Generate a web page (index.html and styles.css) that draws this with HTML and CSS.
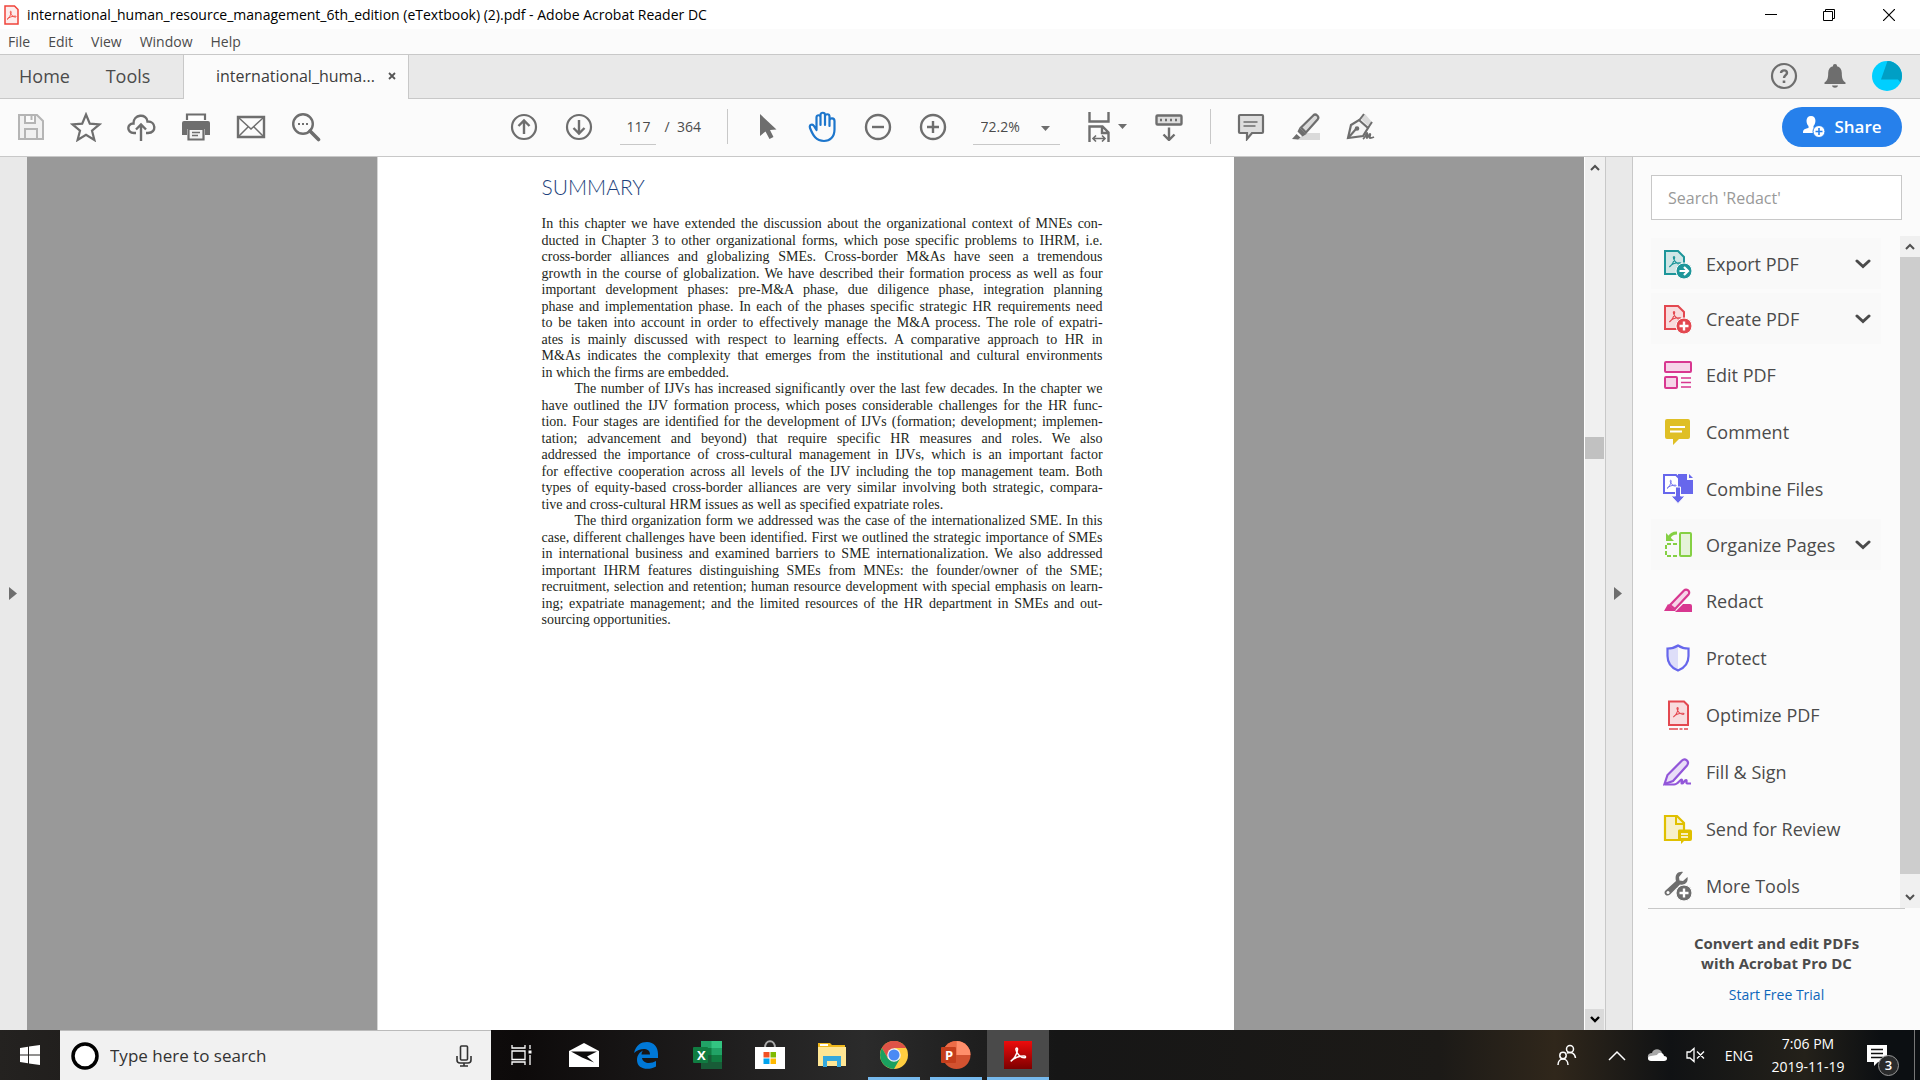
FILE: index.html
```html
<!DOCTYPE html>
<html lang="en">
<head>
  <meta charset="UTF-8" />
  <meta name="viewport" content="width=device-width, initial-scale=1.0"/>
  <title>international_human_resource_management_6th_edition (eTextbook) (2).pdf - Adobe Acrobat Reader DC</title>
  <link rel="stylesheet" href="styles.css">
</head>
<body>
  <svg class="defs" width="0" height="0" aria-hidden="true">
    <symbol id="acro" viewBox="0 0 20 20"><path d="M2 17c3-1.5 7-8 7.5-13 .2-2.4-2-2.4-1.8 0C8.2 8 12.5 13 17 13c2 0 2-1.8 0-1.9C12 11 5 13 2 17z" fill="none" stroke="currentColor" stroke-width="1.6"/></symbol>
    <symbol id="chev" viewBox="0 0 16 10"><path d="M2 2l6 5.500L14 2" fill="none" stroke="#4b4b4b" stroke-width="3" stroke-linecap="round"/></symbol>
  </svg>

  <!-- title bar -->
  <header class="titlebar">
    <svg width="15" height="20" viewBox="0 0 15 20" color="#f0433a"><path d="M1 1h9.500L14 4.500V19H1z" fill="#fdecec" stroke="#f0433a" stroke-width="1.500"/><use href="#acro" x="2" y="5" width="11" height="11"/></svg>
    <span class="title">international_human_resource_management_6th_edition (eTextbook) (2).pdf - Adobe Acrobat Reader DC</span>
    <div class="win-buttons">
      <button aria-label="Minimize"><svg width="12" height="12"><path d="M0 5.500h12" stroke="#000"/></svg></button>
      <button aria-label="Restore"><svg width="12" height="12" fill="none" stroke="#000"><path d="M.5 2.500h9v9h-9zM2.500 2.500v-2h9v9h-2"/></svg></button>
      <button aria-label="Close"><svg width="12" height="12"><path d="M0 0l12 12M12 0L0 12" stroke="#000" stroke-width="1.200"/></svg></button>
    </div>
  </header>

  <nav class="menubar">
    <button>File</button><button>Edit</button><button>View</button><button>Window</button><button>Help</button>
  </nav>

  <!-- tabs -->
  <div class="tabbar">
    <button class="tab-main">Home</button>
    <button class="tab-main">Tools</button>
    <div class="doc-tab">
      <button class="tab-name">international_huma...</button>
      <button class="tab-close" aria-label="Close tab"><svg width="8" height="8"><path d="M1 1l6 6M7 1L1 7" stroke="#555" stroke-width="1.800"/></svg></button>
    </div>
    <div class="account">
      <button aria-label="Help"><svg width="28" height="28" fill="none" stroke="#6e6e6e"><circle cx="14" cy="14" r="12" stroke-width="2.200"/><path d="M11 11c.3-3.600 6-3.500 6 0 0 2-3 2.500-3 5" stroke-width="2.400"/><path d="M14 18.500v2.500" stroke-width="2.600"/></svg></button>
      <button aria-label="Notifications"><svg width="22" height="26" fill="#6e6e6e"><path d="M11 1c1.500 0 2 .8 2 2.200 3 .8 4.800 3 4.800 6.800 0 5 .8 7.500 3.700 9.500V21H.5v-1.500C3.400 17.500 4.200 15 4.200 10 4.200 6.200 6 4 9 3.200 9 1.800 9.500 1 11 1zM8 22.500h6c-.5 3-5.500 3-6 0z"/></svg></button>
      <button aria-label="Account"><svg width="30" height="30"><circle cx="15" cy="15" r="15" fill="#00cfff"/><path d="M15.500 0A15 15 0 0 1 30 15a15 15 0 0 1-1.500 6.500L26 18.500H9z" fill="#009fc5"/></svg></button>
    </div>
  </div>

  <!-- toolbar -->
  <div class="toolbar">
    <div class="tools-left">
      <button class="tool" aria-label="Save"><svg width="28" height="28" fill="none" stroke="#b5b5b5" stroke-width="2"><path d="M2 2h18l6 6v18H2zM8 2v8h10V2M8 26V16h12v10" fill="#f1f1f1"/><path d="M14.500 3v4"/></svg></button>
      <button class="tool" aria-label="Star"><svg width="32" height="30" fill="none" stroke="#6e6e6e" stroke-width="2.200"><path d="M16 2.500l3.800 9.200 9.700.7-7.500 6.300 2.400 9.300L16 22.800 7.600 28l2.400-9.300-7.500-6.300 9.700-.7z"/></svg></button>
      <button class="tool" aria-label="Upload to cloud"><svg width="30" height="30" fill="none" stroke="#6e6e6e" stroke-width="2.400"><path d="M10 21H8C0 21 1 11 7.500 11.500 7 2 21 1 21.500 9.500 30 9 31 21 22 21h-2M15 29V13M10 17.500l5-5 5 5"/></svg></button>
      <button class="tool" aria-label="Print"><svg width="30" height="28"><path d="M6 7V1.500h18V7" fill="#fff" stroke="#6e6e6e" stroke-width="2.200"/><path d="M3 8h24q2 0 2 2v12h-5v-6H6v6H1V10q0-2 2-2z" fill="#6e6e6e"/><path d="M7.500 16h15v10.500h-15z" fill="#f3f3f3" stroke="#6e6e6e" stroke-width="2.200"/><path d="M11 19.500h8M11 22.500h6" stroke="#6e6e6e" stroke-width="1.500"/></svg></button>
      <button class="tool" aria-label="Email"><svg width="30" height="24" fill="none" stroke="#6e6e6e" stroke-width="2"><path d="M2 2h26v20H2z" stroke-width="2.400"/><path d="M3 3l12 11L27 3M3 21l9-9M27 21l-9-9" stroke-width="1.500"/></svg></button>
      <button class="tool" aria-label="Find"><svg width="30" height="30" fill="none" stroke="#6e6e6e"><circle cx="12" cy="12" r="9.800" stroke-width="2.400"/><path d="M19 19l8.500 8.500" stroke-width="3.600" stroke-linecap="round"/><path d="M7 12h2m2 0h2m2 0h2" stroke-width="2"/></svg></button>
    </div>

    <div class="tools-center">
      <button class="tool" aria-label="Previous page"><svg width="28" height="28" fill="none" stroke="#6e6e6e" stroke-width="2.200"><circle cx="14" cy="14" r="12"/><path d="M14 21V8M8.500 13L14 7.500l5.500 5.500" stroke-width="2.400"/></svg></button>
      <button class="tool" aria-label="Next page"><svg width="28" height="28" fill="none" stroke="#6e6e6e" stroke-width="2.200"><circle cx="14" cy="14" r="12"/><path d="M14 7v13M8.500 15l5.500 5.500 5.500-5.500" stroke-width="2.400"/></svg></button>
      <input class="page-number" type="text" value="117" aria-label="Page number">
      <span class="page-total">/&nbsp; 364</span>
      <span class="sep"></span>
      <button class="tool" aria-label="Select"><svg width="18" height="28"><path d="M1 1v22l5.500-4.500 4 7.500 4-2-3.500-7 6.500-.5z" fill="#6e6e6e"/></svg></button>
      <button class="tool" aria-label="Hand tool"><svg width="30" height="32" fill="none" stroke="#1d76cc" stroke-width="2.200" stroke-linejoin="round" stroke-linecap="round"><path d="M8.500 16V6.500c0-3 4-3 4 0V14v-10c0-3 4.500-3 4.500 0v10V5.500c0-3 4.500-3 4.500 0V15v-5.500c.3-3 5-3 5 .5v8.500C26.500 26 22 30 16 30 8 30 5 24.500 2 17c-1-3.500 2.500-4.500 4-2l2.500 4z"/></svg></button>
      <button class="tool" aria-label="Zoom out"><svg width="28" height="28" fill="none" stroke="#6e6e6e" stroke-width="2.400"><circle cx="14" cy="14" r="12"/><path d="M8 14h12"/></svg></button>
      <button class="tool" aria-label="Zoom in"><svg width="28" height="28" fill="none" stroke="#6e6e6e" stroke-width="2.400"><circle cx="14" cy="14" r="12"/><path d="M8 14h12M14 8v12"/></svg></button>
      <div class="zoom-box">
        <select aria-label="Zoom level"><option>72.2%</option></select>
        <svg class="caret" width="9" height="5"><path d="M0 0h9L4.500 5z" fill="#6e6e6e"/></svg>
      </div>
      <button class="tool fit" aria-label="Fit width"><svg width="22" height="30" fill="none" stroke="#6e6e6e" stroke-width="2.400"><path d="M1.500 0v9.500h19V0"/><path d="M1.500 30V14.500h13l6 6V30M14 15v6h6"/><path d="M5 26.500h12M8 23.500l-3 3 3 3M14 23.500l3 3-3 3" stroke-width="1.600"/></svg><svg width="9" height="5"><path d="M0 0h9L4.500 5z" fill="#6e6e6e"/></svg></button>
      <button class="tool" aria-label="Scrolling mode"><svg width="28" height="28" fill="none" stroke="#6e6e6e" stroke-width="2.400"><rect x="1.500" y="2.500" width="25" height="9" rx="1" fill="#ddd"/><path d="M5 7h2m3 0h2m3 0h2m3 0h2" stroke-width="2.600"/><path d="M14 14.500V26M8.500 21.500L14 27l5.500-5.500"/></svg></button>
      <span class="sep"></span>
      <button class="tool" aria-label="Add comment"><svg width="28" height="28" stroke="#6e6e6e" stroke-width="2.200"><path d="M3 2h22q1 0 1 1v16q0 1-1 1H15l-5 6v-6H3q-1 0-1-1V3q0-1 1-1z" fill="#dedede"/><path d="M6.500 9h14M6.500 13h12" stroke-width="1.600"/></svg></button>
      <button class="tool" aria-label="Highlight"><svg width="30" height="30"><path d="M14 21h15v7H6z" fill="#dadada"/><path d="M10 15.500L22.500 3.200c2.300-2 6.200 1.500 4.300 4L15 20.500z" fill="#dadada" stroke="#6e6e6e" stroke-width="2.200"/><path d="M8.500 15.500l7 6.500-4 2.500-5-5zM1 27l4.500-5 4 3.500L7 27.500z" fill="#6e6e6e"/></svg></button>
      <button class="tool" aria-label="Sign"><svg width="30" height="30" fill="none" stroke="#6e6e6e" stroke-width="2.200"><path d="M2 26L5 13l8-5 9 8-5 8z" fill="#f5f5f5"/><path d="M14 6l5-4 7 8-4 4z" fill="#dadada" stroke="none"/><path d="M13 8.500L18 2M22 16l4-6M3 25l7-8" stroke-width="2"/><circle cx="11" cy="16.500" r="1.200" fill="#6e6e6e"/><path d="M17 27c3-2 3-6 4-6s-1 5 0 5 2-4 3-4-1 4 0 4 2 0 4-1" stroke-width="1.800"/></svg></button>
    </div>

    <div class="tools-right">
      <button class="share"><svg width="24" height="24"><path d="M9 1c6 0 5 8 2.500 10v2L14 14v4H1c0-4 1.500-4 5.500-5v-2C4 9 3 1 9 1z" fill="#fff"/><circle cx="17" cy="16.500" r="6" fill="#fff" stroke="#2680eb"/><path d="M13.500 16.500h7M17 13v7" stroke="#2680eb" stroke-width="1.600"/></svg>Share</button>
    </div>
  </div>

  <!-- document and tools pane -->
  <main class="workspace">
    <button class="rail rail-left" aria-label="Show navigation pane"><svg width="8" height="13"><path d="M0 0v13l8-6.500z" fill="#6e6e6e"/></svg></button>
    <div class="viewer">
      <article class="page">
        <h1>SUMMARY</h1>
        <p>
          <span>In this chapter we have extended the discussion about the organizational context of MNEs con-</span>
          <span>ducted in Chapter 3 to other organizational forms, which pose specific problems to IHRM, i.e.</span>
          <span>cross-border alliances and globalizing SMEs. Cross-border M&amp;As have seen a tremendous</span>
          <span>growth in the course of globalization. We have described their formation process as well as four</span>
          <span>important development phases: pre-M&amp;A phase, due diligence phase, integration planning</span>
          <span>phase and implementation phase. In each of the phases specific strategic HR requirements need</span>
          <span>to be taken into account in order to effectively manage the M&amp;A process. The role of expatri-</span>
          <span>ates is mainly discussed with respect to learning effects. A comparative approach to HR in</span>
          <span>M&amp;As indicates the complexity that emerges from the institutional and cultural environments</span>
          <span>in which the firms are embedded.</span>
        </p>
        <p>
          <span>The number of IJVs has increased significantly over the last few decades. In the chapter we</span>
          <span>have outlined the IJV formation process, which poses considerable challenges for the HR func-</span>
          <span>tion. Four stages are identified for the development of IJVs (formation; development; implemen-</span>
          <span>tation; advancement and beyond) that require specific HR measures and roles. We also</span>
          <span>addressed the importance of cross-cultural management in IJVs, which is an important factor</span>
          <span>for effective cooperation across all levels of the IJV including the top management team. Both</span>
          <span>types of equity-based cross-border alliances are very similar involving both strategic, compara-</span>
          <span>tive and cross-cultural HRM issues as well as specified expatriate roles.</span>
        </p>
        <p>
          <span>The third organization form we addressed was the case of the internationalized SME. In this</span>
          <span>case, different challenges have been identified. First we outlined the strategic importance of SMEs</span>
          <span>in international business and examined barriers to SME internationalization. We also addressed</span>
          <span>important IHRM features distinguishing SMEs from MNEs: the founder/owner of the SME;</span>
          <span>recruitment, selection and retention; human resource development with special emphasis on learn-</span>
          <span>ing; expatriate management; and the limited resources of the HR department in SMEs and out-</span>
          <span>sourcing opportunities.</span>
        </p>
      </article>
    </div>
    <div class="scrollbar doc-scroll">
      <span class="scroll-btn"><svg width="10" height="7"><path d="M1 6l4-4 4 4" fill="none" stroke="#505050" stroke-width="2"/></svg></span>
      <span class="track"><span class="thumb"></span></span>
      <span class="scroll-btn pressed"><svg width="10" height="7"><path d="M1 1l4 4 4-4" fill="none" stroke="#000" stroke-width="2.400"/></svg></span>
    </div>
    <button class="rail rail-right" aria-label="Hide tools pane"><svg width="8" height="13"><path d="M0 0v13l8-6.500z" fill="#6e6e6e"/></svg></button>

    <aside class="pane">
      <input class="pane-search" type="text" placeholder="Search 'Redact'" aria-label="Search tools">
      <div class="pane-list">
        <ul>
          <li class="expandable"><button><svg width="30" height="30" color="#1d969a"><path d="M2 2h13l6 6v17H2z" fill="#cfe6e6" stroke="#1d969a" stroke-width="2"/><use href="#acro" x="5" y="6" width="14" height="14"/><circle cx="21" cy="22" r="8" fill="#1d969a" stroke="#fbfbfb"/><path d="M16.500 22h7M21 18l4 4-4 4" fill="none" stroke="#fff" stroke-width="2.200"/></svg><span>Export PDF</span><svg class="chev" width="16" height="10"><use href="#chev"/></svg></button></li>
          <li class="expandable"><button><svg width="30" height="30" color="#e34850"><path d="M2 2h13l6 6v17H2z" fill="#f8dcde" stroke="#e34850" stroke-width="2"/><use href="#acro" x="5" y="6" width="14" height="14"/><circle cx="21" cy="22" r="8" fill="#e34850" stroke="#fbfbfb"/><path d="M16.500 22h9M21 17.500v9" stroke="#fff" stroke-width="2.400"/></svg><span>Create PDF</span><svg class="chev" width="16" height="10"><use href="#chev"/></svg></button></li>
          <li><button><svg width="30" height="30" fill="#f6d4e8" stroke="#d83790" stroke-width="2"><rect x="2" y="2" width="26" height="10" rx="1"/><rect x="2" y="17" width="12" height="11" rx="1"/><path d="M18 18h10M18 22.500h10M18 27h10" stroke-width="1.400"/></svg><span>Edit PDF</span></button></li>
          <li><button><svg width="30" height="30"><path d="M4 2h21q2 0 2 2v16q0 2-2 2h-9l-6 6v-6H4q-2 0-2-2V4q0-2 2-2z" fill="#dfbf25"/><path d="M7 10h15M7 14.500h12" stroke="#fff" stroke-width="2"/></svg><span>Comment</span></button></li>
          <li><button><svg width="30" height="30" color="#6767ec"><path d="M1 1h12l3 3v15H1z" fill="#fff" stroke="#6767ec" stroke-width="2"/><use href="#acro" x="3" y="5" width="11" height="11"/><path d="M15 0h9v6h6v14H15z" fill="#6767ec"/><path d="M26 0l4 4h-4z" fill="#6767ec"/><path d="M12.500 13h5v9h4.500l-7 7.500L8 22h4.500z" fill="#6767ec" stroke="#fbfbfb"/></svg><span>Combine Files</span></button></li>
          <li class="expandable"><button><svg width="30" height="30" fill="none" stroke="#85d044" stroke-width="2"><rect x="17" y="3" width="11" height="23" rx="1" fill="#e5f3d9"/><path d="M14 14H3v12h11" stroke-dasharray="4 2"/><path d="M14 3Q8 3 6 8" stroke-width="3"/><path d="M3 3v8h8z" fill="#85d044" stroke="none"/></svg><span>Organize Pages</span><svg class="chev" width="16" height="10"><use href="#chev"/></svg></button></li>
          <li><button><svg width="30" height="30"><path d="M7 19L21 4.500c2.500-2.500 7 1 4.500 4L12 23z" fill="#f6d4e8" stroke="#d83790" stroke-width="2.200"/><path d="M5 18l8 7H1zM20 18h7q2 0 2 2v6H12z" fill="#d83790"/></svg><span>Redact</span></button></li>
          <li><button><svg width="30" height="30"><path d="M15 3v24C8 24 4.500 20 4.500 13V5.500C9 5.500 12 4.500 15 3z" fill="#dedef9"/><path d="M15 2.500c3 2 6.500 3 10.500 3V13c0 7-4 12-10.500 14.500C8.500 25 4.500 20 4.500 13V5.500c4 0 7.500-1 10.500-3z" fill="none" stroke="#6767ec" stroke-width="2.200"/></svg><span>Protect</span></button></li>
          <li><button><svg width="30" height="30" color="#e34850"><path d="M6 1.500h15l4 4V25H6z" fill="#f8dcde" stroke="#e34850" stroke-width="2"/><use href="#acro" x="9" y="6" width="13" height="13"/><path d="M6 29h9m6 0h4M16.500 29h3" stroke="#e34850" stroke-width="1.600"/></svg><span>Optimize PDF</span></button></li>
          <li><button><svg width="30" height="30" fill="none" stroke="#9256d9" stroke-width="2.200"><path d="M1.500 27l3-9L19 3.500c3-3 8 1 5 5L10 24z" fill="#e9ddf7"/><path d="M1.500 27.500H11c4 0 6-5 7.500-5s-1 4 .5 4 2.500-3.500 4-3.500-.5 3.500 1 3.500h4"/></svg><span>Fill &amp; Sign</span></button></li>
          <li><button><svg width="30" height="30"><path d="M2 2h12l7 7v17H2z" fill="#f7f0cb" stroke="#e0c000" stroke-width="2.200"/><path d="M13 2v8h8" fill="none" stroke="#e0c000" stroke-width="2"/><path d="M16 15.500h11q2 0 2 2V25q0 2-2 2h-6l-3 3v-3h-2q-1 0-1-2v-8q0-1.500 1-1.500z" fill="#e0c000"/><path d="M18 20h7M18 23h7" stroke="#fff" stroke-width="1.400"/></svg><span>Send for Review</span></button></li>
          <li><button><svg width="30" height="30" fill="#6e6e6e"><path d="M20 1c-6-1-8.500 4-7 9L2.500 19.500c-3 3 1.500 7 4.500 4L17 13.500c5 1 8.500-2.500 7.500-7.500L20 10l-3.500-.5-.5-3.500z"/><circle cx="5" cy="21.500" r="1.500" fill="#fff"/><circle cx="21" cy="22" r="8" stroke="#fbfbfb"/><path d="M16.500 22h9M21 17.500v9" stroke="#fff" stroke-width="2.400"/></svg><span>More Tools</span></button></li>
        </ul>
        <div class="scrollbar pane-scroll">
          <span class="scroll-btn"><svg width="10" height="7"><path d="M1 6l4-4 4 4" fill="none" stroke="#505050" stroke-width="2"/></svg></span>
          <span class="track"><span class="thumb"></span></span>
          <span class="scroll-btn"><svg width="10" height="7"><path d="M1 1l4 4 4-4" fill="none" stroke="#505050" stroke-width="2"/></svg></span>
        </div>
      </div>
      <div class="promo">
        <strong>Convert and edit PDFs<br>with Acrobat Pro DC</strong>
        <a href="#">Start Free Trial</a>
      </div>
    </aside>
  </main>

  <!-- windows taskbar -->
  <footer class="taskbar">
    <button class="start" aria-label="Start"><svg width="20" height="20" fill="#fff"><path d="M0 3l8-1.200V9.500H0zM9 1.600L20 0v9.500H9zM0 10.500h8v7.700L0 17zM9 10.500h11V20L9 18.400z"/></svg></button>
    <div class="task-search">
      <svg width="28" height="28"><circle cx="14" cy="14" r="12" fill="#fff" stroke="#000" stroke-width="3.500"/></svg>
      <input type="text" placeholder="Type here to search" aria-label="Type here to search">
      <svg width="16" height="22" fill="none" stroke="#333" stroke-width="1.600"><rect x="4.500" y="1" width="7" height="14" rx="1"/><path d="M1 11v4q0 3 3 3h8q3 0 3-3v-4M8 18v3M4 21h8"/></svg>
    </div>
    <button class="app" aria-label="Task view"><svg width="22" height="20" fill="none" stroke="#fff" stroke-width="1.300"><path d="M1 0v3h13V0M1 20v-3h13v3M1 6h13v8.500H1zM19 0v4M19 10v10"/><path d="M17.500 5.500h3v3h-3z" fill="#fff" stroke="none"/></svg></button>
    <button class="app" aria-label="Mail"><svg width="30" height="26"><path d="M0 9l15-8 15 8v16H0z" fill="#fff"/><path d="M2 9.500h26l-10 5 7 6-12-5z" fill="#0c0b0b"/></svg></button>
    <button class="app" aria-label="Edge"><svg width="26" height="28"><path d="M1 12C3 4 8 1 14 1c7 0 11 5 11 12v4H9c1 6 9 6 14 3v5.500C15 30 4 28 4 19c0-5 3-8 6-9.500-1 1.500-1.500 2.500-1.500 4H17c0-7-10-7-16-1.500z" fill="#0078d7"/></svg></button>
    <button class="app" aria-label="Excel"><svg width="30" height="30"><path d="M8 1h21v28H8z" fill="#21a366"/><path d="M18.500 1H29v7H18.500z" fill="#33c481"/><path d="M8 8h10.500v7H8z" fill="#107c41"/><path d="M8 15h21v14H8z" fill="#185c37"/><path d="M18.500 15H29v7H18.500z" fill="#107c41"/><rect y="7" width="15" height="16" rx="1" fill="#107c41"/><text x="4" y="20" fill="#fff" font-family="Open Sans" font-size="13" font-weight="700">X</text></svg></button>
    <button class="app" aria-label="Store"><svg width="30" height="30"><path d="M10 8c0-9 10-9 10 0" fill="none" stroke="#aaa" stroke-width="2"/><path d="M0 7h30v22H0z" fill="#fff"/><path d="M8.500 12h6v5.500h-6z" fill="#f25022"/><path d="M15.500 12h5.500v5.500h-5.500z" fill="#7fba00"/><path d="M8.500 18.500h6V24h-6z" fill="#00a4ef"/><path d="M15.500 18.500h5.500V24h-5.500z" fill="#ffb900"/></svg></button>
    <button class="app" aria-label="File Explorer"><svg width="28" height="26"><path d="M0 1h12l2 2h13v4H0z" fill="#f0b81c"/><path d="M0 5h28v19H0z" fill="#ffe694"/><path d="M2 2h8v2H2z" fill="#fff"/><path d="M5 25V14h18v11h-4v-6H9v6z" fill="#35a8dd"/></svg></button>
    <button class="app running" aria-label="Chrome"><svg width="28" height="28"><circle cx="14" cy="14" r="14" fill="#ffcd40"/><path d="M14 14L1.900 7A14 14 0 0 1 26.100 7L14 7z" fill="#db4437"/><path d="M14 7h12.100A14 14 0 0 0 1.900 7l6 10.500z" fill="#de5347"/><path d="M1.900 7A14 14 0 0 0 14 28l6-10.500-12 0z" fill="#1aa05f"/><circle cx="14" cy="14" r="6.800" fill="#f1f1f1"/><circle cx="14" cy="14" r="5.500" fill="#4a8af4"/></svg></button>
    <button class="app running" aria-label="PowerPoint"><svg width="30" height="30"><circle cx="15.500" cy="15" r="14" fill="#d35230"/><path d="M15.500 1A14 14 0 0 0 1.500 15h14z" fill="#ed6c47"/><path d="M15.500 1a14 14 0 0 1 14 14h-14z" fill="#ff8f6b"/><rect y="7" width="15" height="16" rx="1" fill="#c43e1c"/><text x="4" y="20" fill="#fff" font-family="Open Sans" font-size="13" font-weight="700">P</text></svg></button>
    <button class="app running active" aria-label="Acrobat Reader"><svg width="28" height="28" color="#fff"><defs><linearGradient id="red" x2="0" y2="1"><stop stop-color="#ed0c0c"/><stop offset="1" stop-color="#7d0000"/></linearGradient></defs><path d="M0 0h28v28H0z" fill="url(#red)"/><use href="#acro" x="5" y="5" width="18" height="18"/></svg></button>

    <div class="tray">
      <button class="tray-people" aria-label="People"><svg width="20" height="22" fill="none" stroke="#fff" stroke-width="1.500"><circle cx="13" cy="5" r="3.500"/><circle cx="6" cy="11.500" r="3.200"/><path d="M1 21c0-8 10-8 10 0M10 9c4-1.500 8 0 8.500 5"/></svg></button>
      <button class="tray-up" aria-label="Show hidden icons"><svg width="18" height="11"><path d="M1 10l8-8 8 8" fill="none" stroke="#fff" stroke-width="1.500"/></svg></button>
      <button class="tray-icon" aria-label="OneDrive"><svg width="20" height="14"><path d="M3 12C-1 9 1 5 5 5c1-5 9-5 10 0z" fill="#a8a8a8"/><path d="M4 13C0 13 0 8 4 8l6-1c2-4 7-2 7 1 4 0 4 5 0 5z" fill="#fff"/></svg></button>
      <button class="tray-icon" aria-label="Volume muted"><svg width="20" height="16" fill="none" stroke="#fff" stroke-width="1.300"><path d="M1 5h3l4-3.500v13L4 11H1zM11 4.500l7 7M18 4.500l-7 7"/></svg></button>
      <button class="tray-lang">ENG</button>
      <button class="clock"><span>7:06 PM</span><span>2019-11-19</span></button>
      <button class="notify" aria-label="3 notifications"><svg width="20" height="21"><path d="M0 0h20v17h-9l-4 4v-4H0z" fill="#fff"/><path d="M4 4.500h12M4 8.500h12M4 12.500h12" stroke="#111" stroke-width="1.300"/></svg><span class="badge">3</span></button>
    </div>
  </footer>
</body>
</html>
```

FILE: styles.css
```css
* { box-sizing: border-box; }
body { margin: 0; height: 100vh; display: flex; flex-direction: column; overflow: hidden; font-family: "Open Sans", "Noto Sans", sans-serif; font-size: 14px; color: #4b4b4b; background: #fbfbfb; }
button, input, select { font: inherit; color: inherit; background: none; border: 0; padding: 0; margin: 0; border-radius: 0; outline: 0; }
button { display: flex; align-items: center; justify-content: center; flex-shrink: 0; cursor: pointer; white-space: nowrap; }
svg { display: block; flex-shrink: 0; }
.defs { position: absolute; }

/* title + menu */
.titlebar { display: flex; align-items: center; height: 29px; padding-left: 4px; gap: 8px; background: #fff; color: #000; flex-shrink: 0; }
.title { white-space: nowrap; }
.win-buttons { display: flex; margin-left: auto; align-self: stretch; }
.win-buttons button { width: 58px; }
.win-buttons button:last-child { width: 62px; }
.menubar { display: flex; align-items: center; height: 26px; padding-left: 8px; gap: 18px; border-bottom: 1px solid #c8c8c8; flex-shrink: 0; }

/* tabs */
.tabbar { display: flex; height: 44px; background: #e9e9e9; border-bottom: 1px solid #c8c8c8; flex-shrink: 0; }
.tab-main { width: 89px; padding-bottom: 2px; font-size: 18px; }
.tab-main + .tab-main { width: 78px; margin-right: 16px; }
.doc-tab { display: flex; align-items: center; width: 226px; margin-bottom: -1px; padding: 0 0 2px 32px; gap: 10px; background: #fbfbfb; border: 1px solid #c8c8c8; border-width: 0 1px; }
.tab-name { font-size: 16px; color: #3c3c3c; width: 162px; justify-content: flex-start; }
.account { display: flex; align-items: center; margin-left: auto; padding: 0 18px 2px 0; gap: 26px; }

/* toolbar */
.toolbar { display: grid; grid-template-columns: 1fr auto 1fr; align-items: center; height: 58px; padding: 0 18px 2px 0; border-bottom: 1px solid #c8c8c8; flex-shrink: 0; }
.tools-left { display: flex; padding-left: 3px; }
.tools-center { display: flex; align-items: center; padding-right: 17px; }
.tools-right { display: flex; justify-content: flex-end; }
.tool { width: 55px; height: 40px; }
.page-number { width: 36px; height: 36px; margin-left: 13px; padding-left: 2px; text-align: center; border-bottom: 1px solid #c8c8c8; }
.page-total { width: 71px; padding-left: 9px; white-space: nowrap; }
.sep { width: 1px; height: 35px; background: #c8c8c8; margin-right: 13px; }
.zoom-box { position: relative; margin-left: 12px; margin-right: 20px; }
.zoom-box select { appearance: none; width: 87px; height: 36px; padding-left: 8px; border-bottom: 1px solid #c8c8c8; }
.caret { position: absolute; right: 10px; top: 17px; }
.fit { width: 52px; gap: 8px; justify-content: flex-start; padding-left: 8px; margin-right: 10px; }
.fit + .tool { margin-right: 13px; }
.share { width: 120px; height: 40px; gap: 8px; border-radius: 20px; background: #2680eb; color: #fff; font-size: 17px; font-weight: 600; }

/* workspace */
.workspace { display: flex; flex: 1; min-height: 0; }
.rail { width: 27px; background: #e9e9e9; }
.rail-left { padding-right: 2px; }
.rail-right { width: 28px; padding-right: 2px; border: 1px solid #c8c8c8; border-width: 0 1px; }
.viewer { flex: 1; background: #999; display: flex; justify-content: center; }
.page { width: 55.1%; background: #fff; border-left: 1px solid #d5d5d5; padding: 16px 0 0 164px; }
.page h1 { margin: 0 0 15px; font: 300 21px/28px Lato, sans-serif; color: #1d3f7c; }
.page p { width: 561px; margin: 0; font: 14px/1.18 "Liberation Serif", serif; color: #231f20; }
.page p span { display: block; white-space: nowrap; text-align: justify; text-align-last: justify; }
.page p span:last-child { text-align-last: left; }
.page p + p span:first-child { padding-left: 33px; }

.scrollbar { display: flex; flex-direction: column; width: 20px; background: #f0f0f0; }
.scroll-btn { display: flex; align-items: center; justify-content: center; height: 21px; flex-shrink: 0; }
.pressed { background: #dadada; }
.track { flex: 1; }
.thumb { display: block; background: #cdcdcd; }
.doc-scroll { width: 21px; padding-right: 1px; border-left: 1px solid #fff; }
.doc-scroll .track { padding-top: 259px; }
.doc-scroll .thumb { height: 22px; background: #c1c1c1; }
.pane-scroll .thumb { height: 98%; }

/* tools pane */
.pane { display: flex; flex-direction: column; width: 287px; }
.pane-search { height: 45px; margin: 18px 18px 16px; padding: 0 16px; border: 1px solid #c8c8c8; background: #fff; font-size: 16px; flex-shrink: 0; }
.pane-search::placeholder { color: #999; opacity: 1; }
.pane-list { display: flex; flex: 1; min-height: 0; justify-content: space-between; overflow: hidden; }
.pane-list ul { width: 230px; margin: 0 0 0 18px; padding: 0; list-style: none; }
.pane-list li { height: 57px; }
.pane-list li.expandable { height: 55px; padding: 2px 0; }
.pane-list li button { width: 100%; height: 100%; padding: 0 10px 0 12px; gap: 13px; justify-content: flex-start; font-size: 18px; }
.expandable button { background: #f9f9f9; }
.chev { margin-left: auto; }
.promo { display: flex; flex-direction: column; align-items: center; height: 122px; margin: 0 15px; padding-top: 24px; gap: 12px; border-top: 1px solid #c8c8c8; text-align: center; line-height: 20px; flex-shrink: 0; }
.promo strong { font-size: 15px; font-weight: 700; }
.promo a { color: #0d66ba; text-decoration: none; }

/* taskbar */
.taskbar { display: flex; height: 50px; color: #fff; background: linear-gradient(90deg, #242220 0%, #0d0a0a 27%, #2b2b2b 45%, #161616 55%, #1c1a17 75%, #30271b 81%, #101214 87%, #24211a 94%, #0c0f12 98%); flex-shrink: 0; }
.start { width: 60px; }
.task-search { display: flex; align-items: center; width: 431px; padding: 0 19px 0 11px; gap: 11px; background: #f1f1f1; border-top: 1px solid #bbb; color: #333; }
.task-search input { flex: 1; min-width: 0; font-size: 17px; }
.task-search input::placeholder { color: #333; opacity: 1; }
.app { width: 62px; border-bottom: 3px solid transparent; border-top: 3px solid transparent; }
.running { width: 52px; margin: 0 5px; border-bottom-color: #76b9ed; }
.active { width: 62px; margin: 0; background: #4a4a4a; border-top-color: #4a4a4a; }
.tray { display: flex; align-items: center; margin-left: auto; margin-right: 5px; padding-right: 14px; border-right: 1px solid #777; }
.tray button { height: 50px; }
.tray-people { width: 60px; }
.tray-up { width: 40px; }
.tray-icon { width: 39px; }
.tray-lang { width: 48px; }
.tray .clock { flex-direction: column; width: 90px; line-height: 23px; }
.tray .notify { position: relative; width: 47px; }
.badge { position: absolute; right: 1px; bottom: 4px; width: 21px; height: 21px; border: 1px solid #999; border-radius: 50%; background: #2a2b2c; font-size: 13px; font-weight: 600; line-height: 19px; text-align: center; }
```
